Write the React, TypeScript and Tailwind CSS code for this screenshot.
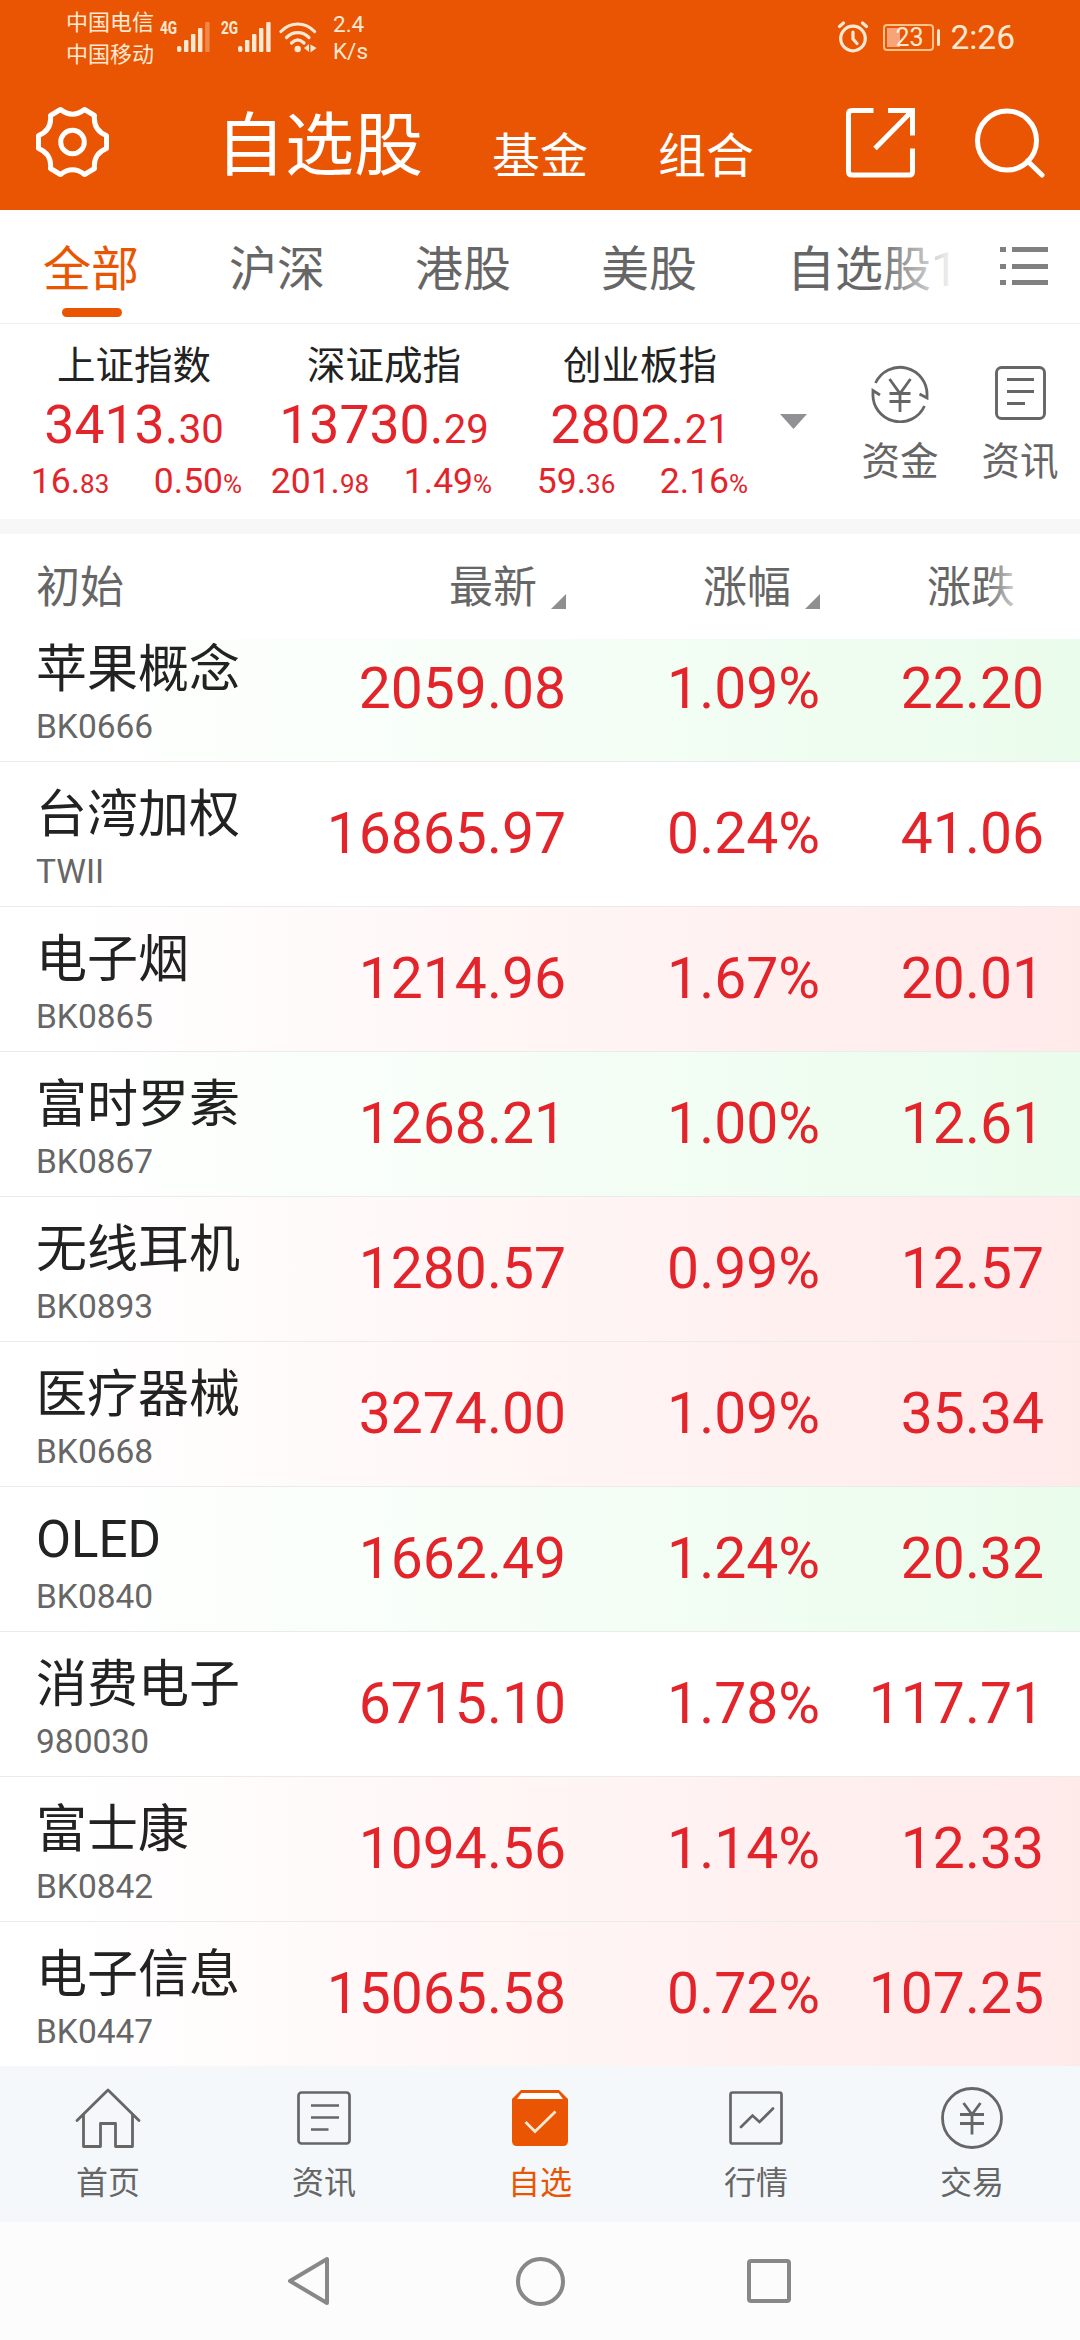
import React from 'react'

type Trend = 'up' | 'down' | 'flat'

interface Quote {
  name: string
  code: string
  price: string
  percent: string
  change: string
  trend: Trend
}

interface MarketIndex {
  name: string
  value: [string, string]
  change: [string, string]
  percent: string
}

const QUOTES: Quote[] = [
  { name: '苹果概念', code: 'BK0666', price: '2059.08', percent: '1.09%', change: '22.20', trend: 'down' },
  { name: '台湾加权', code: 'TWII', price: '16865.97', percent: '0.24%', change: '41.06', trend: 'flat' },
  { name: '电子烟', code: 'BK0865', price: '1214.96', percent: '1.67%', change: '20.01', trend: 'up' },
  { name: '富时罗素', code: 'BK0867', price: '1268.21', percent: '1.00%', change: '12.61', trend: 'down' },
  { name: '无线耳机', code: 'BK0893', price: '1280.57', percent: '0.99%', change: '12.57', trend: 'up' },
  { name: '医疗器械', code: 'BK0668', price: '3274.00', percent: '1.09%', change: '35.34', trend: 'up' },
  { name: 'OLED', code: 'BK0840', price: '1662.49', percent: '1.24%', change: '20.32', trend: 'down' },
  { name: '消费电子', code: '980030', price: '6715.10', percent: '1.78%', change: '117.71', trend: 'flat' },
  { name: '富士康', code: 'BK0842', price: '1094.56', percent: '1.14%', change: '12.33', trend: 'up' },
  { name: '电子信息', code: 'BK0447', price: '15065.58', percent: '0.72%', change: '107.25', trend: 'up' },
]

const INDEXES: MarketIndex[] = [
  { name: '上证指数', value: ['3413.', '30'], change: ['16.', '83'], percent: '0.50' },
  { name: '深证成指', value: ['13730.', '29'], change: ['201.', '98'], percent: '1.49' },
  { name: '创业板指', value: ['2802.', '21'], change: ['59.', '36'], percent: '2.16' },
]

const TABS = ['全部', '沪深', '港股', '美股', '自选股1']

const ROW_BG: Record<Trend, string> = {
  up: 'bg-linear-to-r from-white from-6% to-[#ffeaea]',
  down: 'bg-linear-to-r from-white from-6% to-[#eafcec]',
  flat: 'bg-white',
}

function Signal({ weak }: { weak?: boolean }) {
  return (
    <svg width="33" height="30" viewBox="0 0 33 30" fill="#ffe9d2">
      <rect x="0" y="24" width="4.4" height="6" rx="2" />
      <rect x="7" y="18" width="4.4" height="12" rx="1" />
      <rect x="14" y="12" width="4.4" height="18" rx="1" />
      <rect x="21" y="6" width="4.4" height="24" rx="1" />
      <rect x="28.2" y="0" width="4.4" height="30" rx="1" opacity={weak ? 0.35 : 1} />
    </svg>
  )
}

function WifiIcon() {
  return (
    <svg width="38" height="31" viewBox="0 0 38 31" fill="none" stroke="#ffe9d2" strokeWidth="3.2" strokeLinecap="round">
      <path d="M2 9.5C11.5 -.5 26 -.5 35.5 9.5" />
      <path d="M7.5 15.5C14 9 23.5 9 30 15.5" />
      <path d="M12.5 21C16.5 17 21 17 25 21" />
      <circle cx="18.7" cy="27" r="3.2" fill="#ffe9d2" stroke="none" />
      <path d="M30 22v8l-5-4zM31.5 22.5v8l6-4.5z" fill="#ffe9d2" stroke="none" />
    </svg>
  )
}

function AlarmIcon() {
  return (
    <svg width="32" height="32" viewBox="0 0 32 32" fill="none" stroke="#ffe9d2" strokeWidth="3.2" strokeLinecap="round">
      <circle cx="16" cy="17.5" r="12.3" />
      <path d="M16 11v7l4 4.5" />
      <path d="M2.5 5.5l4-3.500M29.5 5.5l-4-3.500" />
    </svg>
  )
}

function GearIcon() {
  return (
    <svg width="73" height="70" viewBox="0 0 73 70" fill="none" stroke="#fff" strokeWidth="5" strokeLinejoin="round">
      <path d="M24.5 2.500Q36.500 12 48.500 2.500L58.500 8.500Q57 23 70.500 28.500V41.500Q57 47 58.500 61.500L48.500 67.500Q36.500 58 24.500 67.500L14.500 61.500Q16 47 2.500 41.500V28.500Q16 23 14.500 8.500Z" />
      <circle cx="36.5" cy="35" r="11.8" />
    </svg>
  )
}

function ShareIcon() {
  return (
    <svg width="70" height="70" viewBox="0 0 70 70" fill="none" stroke="#fff" strokeWidth="5">
      <path d="M27.5 2.500H6Q2.500 2.500 2.500 6V63.500Q2.500 67 6 67H63.500Q66.500 67 66.500 63.500V40.500" />
      <path d="M42 2.500H66.500V27.500M66 3L29 40.500" />
    </svg>
  )
}

function SearchIcon() {
  return (
    <svg width="70" height="70" viewBox="0 0 70 70" fill="none" stroke="#fff" strokeWidth="5">
      <circle cx="32" cy="32.5" r="29.5" />
      <path d="M52.5 53L67 67" strokeLinecap="round" />
    </svg>
  )
}

function ListIcon() {
  return (
    <svg width="48" height="38" viewBox="0 0 48 38" fill="#808080">
      <path d="M0 0h6v5H0zM12 0h36v5H12zM0 17h6v5H0zM12 17h36v5H12zM0 33h6v5H0zM12 33h36v5H12z" />
    </svg>
  )
}

function FundIcon() {
  return (
    <svg width="58" height="58" viewBox="0 0 58 58" fill="none" stroke="#666" strokeWidth="2.8">
      <path d="M4.5 18A27 27 0 0 1 56 30.500V33L48.500 29" />
      <path d="M53.5 41A27 27 0 0 1 2 28V25.500L9 30" />
      <path d="M18.5 14l10.500 14.500L39.500 14M18.500 28.500h21M18.500 36.500h21M29 28.500V47" />
    </svg>
  )
}

function NewsIcon() {
  return (
    <svg width="54" height="54" viewBox="0 0 54 54" fill="none" stroke="#666" strokeWidth="2.7">
      <rect x="1.5" y="1.5" width="51" height="51" rx="3" />
      <path d="M14 14.5h28M14 26.500h28M14 38.500h17.500" />
    </svg>
  )
}

// 顶部资讯图标比底栏的窄一点,圆角更大
function NewsSmallIcon() {
  return (
    <svg width="51" height="54" viewBox="0 0 51 54" fill="none" stroke="#666" strokeWidth="2.9">
      <rect x="1.5" y="1.5" width="48" height="51" rx="5" />
      <path d="M12 13.5h27M12 25.500h27M12 37.500h18" />
    </svg>
  )
}

function HomeIcon() {
  return (
    <svg width="66" height="60" viewBox="0 0 66 60" fill="none" stroke="#666" strokeWidth="2.8" strokeLinejoin="round" strokeLinecap="round">
      <path d="M2 32.5L33 2L64 32.500" />
      <path d="M8.5 27V58.500H25.500V35.500H40.500V58.500H57.500V27" />
    </svg>
  )
}

function WatchIcon() {
  return (
    <svg width="56" height="56" viewBox="0 0 56 56" fill="none">
      <path d="M9 0H47L56 9V51Q56 56 51 56H5Q0 56 0 51V9Z" fill="#ea5504" />
      <path d="M9.5 3H46.500L51 9H5Z" fill="#fff" />
      <path d="M13.5 32L23 41.500L43.500 21.500" stroke="#ffe9d2" strokeWidth="2.8" />
    </svg>
  )
}

function MarketIcon() {
  return (
    <svg width="54" height="54" viewBox="0 0 54 54" fill="none" stroke="#666" strokeWidth="2.7">
      <rect x="1.5" y="1.5" width="51" height="51" rx="2" />
      <path d="M12 36L23.500 24.500L30.500 31L44 17.500" strokeLinecap="round" />
    </svg>
  )
}

function TradeIcon() {
  return (
    <svg width="62" height="62" viewBox="0 0 62 62" fill="none" stroke="#666" strokeWidth="2.8">
      <circle cx="31" cy="31" r="29.5" />
      <path d="M22.5 16L31 27.500L39.500 16M19 27.500h24M19 36.500h24M31 27.500V47.500" />
    </svg>
  )
}

function SortMark() {
  return (
    <svg width="15" height="15" viewBox="0 0 15 15" fill="#8f8f8f">
      <path d="M15 0V15H0Z" />
    </svg>
  )
}

const NAV_ITEMS = [
  { label: '首页', icon: <HomeIcon /> },
  { label: '资讯', icon: <NewsIcon /> },
  { label: '自选', icon: <WatchIcon />, active: true },
  { label: '行情', icon: <MarketIcon /> },
  { label: '交易', icon: <TradeIcon /> },
]

function StatusBar() {
  return (
    <div className="flex h-[74px] items-start pl-[66px] pr-[65px] text-[#ffe9d2]">
      <div className="mt-[7px] w-[94px] whitespace-nowrap text-[22px] leading-[32px]">
        <div>中国电信</div>
        <div>中国移动</div>
      </div>
      <div className="mt-[18px] w-[17px] text-[19px] font-bold leading-[20px]">
        <span className="inline-block origin-left scale-x-[0.72]">4G</span>
      </div>
      <div className="mt-[22px] w-[44px]"><Signal weak /></div>
      <div className="mt-[18px] w-[17px] text-[19px] font-bold leading-[20px]">
        <span className="inline-block origin-left scale-x-[0.72]">2G</span>
      </div>
      <div className="mt-[22px] w-[41px]"><Signal /></div>
      <div className="mt-[22px] w-[54px]"><WifiIcon /></div>
      <div className="mt-[11px] text-[22.5px] leading-[27px]">
        <div>2.4</div>
        <div>K/s</div>
      </div>
      <div className="ml-auto mt-[21px]"><AlarmIcon /></div>
      {/* 电池 */}
      <div className="ml-[14px] mt-[24px] flex h-[27px] w-[51px] rounded-[4px] border-2 border-[#ffc08a] p-[2px]">
        <div className="w-[13px] bg-[#f6a578]" />
        <div className="-ml-[5px] text-[25px] leading-[19px]">23</div>
      </div>
      <div className="ml-[3px] mt-[29px] h-[17px] w-[3px] rounded-sm bg-[#ffe9d2]" />
      <div className="ml-[10px] mt-[18px] text-[33.5px] leading-[40px]">2:26</div>
    </div>
  )
}

function TitleBar() {
  return (
    <div className="flex h-[136px] items-start pl-[36px] pr-[35px] text-white">
      <div className="mt-[33px] w-[180px]"><GearIcon /></div>
      <div className="mt-[33px] text-[69px] leading-[80px]">自选股</div>
      <div className="ml-[69px] mt-[51px] text-[48px] leading-[64px]">基金</div>
      <div className="ml-[70px] mt-[51px] text-[48px] leading-[64px]">组合</div>
      <div className="ml-auto mt-[34px]"><ShareIcon /></div>
      <div className="ml-[59px] mt-[34px]"><SearchIcon /></div>
    </div>
  )
}

function IndexCard({ item }: { item: MarketIndex }) {
  return (
    <div className="w-[256px] text-center text-[#e3242b]">
      <div className="text-[38.5px] leading-[50px] text-[#222]">{item.name}</div>
      <div className="mt-[4px] text-[53.5px] leading-[60px]">
        {item.value[0]}
        <span className="text-[40px]">{item.value[1]}</span>
      </div>
      <div className="-mt-px grid grid-cols-2 text-[35.5px] leading-[44px]">
        <div>
          {item.change[0]}
          <span className="text-[26px]">{item.change[1]}</span>
        </div>
        <div>
          {item.percent}
          <span className="text-[26px]">%</span>
        </div>
      </div>
    </div>
  )
}

function QuoteRow({ quote }: { quote: Quote }) {
  return (
    <div className={`flex h-[145px] shrink-0 items-center border-b border-[#ebebeb] ${ROW_BG[quote.trend]}`}>
      <div className="w-[265px] self-start pl-[36px] pt-[21px]">
        <div className="text-[51px] leading-[64px] text-[#222]">{quote.name}</div>
        <div className="mt-[5px] text-[33.5px] leading-[40px] text-[#666]">{quote.code}</div>
      </div>
      <div className="w-[301px] text-right text-[57px] leading-[70px] text-[#e3242b]">{quote.price}</div>
      <div className="w-[254px] text-right text-[57px] leading-[70px] text-[#e3242b]">{quote.percent}</div>
      <div className="w-[224px] text-right text-[57px] leading-[70px] text-[#e3242b]">{quote.change}</div>
    </div>
  )
}

export default function App() {
  return (
    <div className="flex h-[2340px] w-[1080px] flex-col overflow-hidden bg-white font-['Roboto','Noto_Sans_CJK_SC',sans-serif]">
      <header className="h-[210px] bg-[#ea5504]">
        <StatusBar />
        <TitleBar />
      </header>

      {/* 分组标签 */}
      <div className="flex h-[114px] border-b border-[#eee]">
        <div className="relative flex w-[957px] gap-[90px] overflow-hidden whitespace-nowrap pl-[43px] text-[48px] leading-[64px] text-[#666]">
          {TABS.map((tab, i) => (
            <div key={tab} className={i === 0 ? 'flex flex-col items-center pt-[28px] text-[#ea5504]' : 'pt-[28px]'}>
              {tab}
              {i === 0 && <div className="mt-[6px] ml-[2px] h-[9px] w-[60px] rounded-full bg-[#ea5504]" />}
            </div>
          ))}
          <div className="absolute inset-y-0 right-0 w-[80px] bg-linear-to-r from-white/0 to-white" />
        </div>
        <div className="ml-[43px] mt-[37px]"><ListIcon /></div>
      </div>

      {/* 指数 */}
      <div className="flex h-[195px] pl-[6px] pt-[17px]">
        <div className="grid grid-cols-[250px_256px_256px]">
          {INDEXES.map((item) => (
            <IndexCard key={item.name} item={item} />
          ))}
        </div>
        <svg className="ml-[12px] mt-[73px]" width="27" height="15" viewBox="0 0 27 15" fill="#919195">
          <path d="M0 0H27L13.500 15Z" />
        </svg>
        <div className="ml-[33px] mt-[24px] flex w-[120px] flex-col items-center text-[38.5px] leading-[50px] text-[#666]">
          <FundIcon />
          <div className="mt-[14px]">资金</div>
        </div>
        <div className="mt-[25px] flex w-[120px] flex-col items-center text-[38.5px] leading-[50px] text-[#666]">
          <NewsSmallIcon />
          <div className="mt-[17px]">资讯</div>
        </div>
      </div>
      <div className="h-[15px] bg-[#f7f7f7]" />

      {/* 表头 */}
      <div className="flex h-[105px] items-start pt-[24px] text-[44px] leading-[60px] text-[#666]">
        <div className="w-[265px] pl-[36px]">初始</div>
        <div className="flex w-[301px] items-end justify-end gap-[14px]">
          最新
          <div className="pb-[9px]"><SortMark /></div>
        </div>
        <div className="flex w-[254px] items-end justify-end gap-[14px]">
          涨幅
          <div className="pb-[9px]"><SortMark /></div>
        </div>
        <div className="relative ml-[107px]">
          涨跌
          <div className="absolute inset-y-0 right-0 w-[30px] bg-linear-to-r from-white/0 to-white/70" />
        </div>
      </div>

      {/* 行情列表,首行被表头遮住一部分 */}
      <main className="flex h-[1427px] flex-col justify-end overflow-hidden">
        <div className="-mb-px">
          {QUOTES.map((quote) => (
            <QuoteRow key={quote.code} quote={quote} />
          ))}
        </div>
      </main>

      <nav className="grid h-[156px] grid-cols-5 bg-[#f4f8fb]">
        {NAV_ITEMS.map(({ label, icon, active }) => (
          <div
            key={label}
            className={`flex flex-col items-center pt-[20px] text-[32px] leading-[44px] ${active ? 'text-[#ea5504]' : 'text-[#666]'}`}
          >
            <div className="flex h-[64px] items-center justify-center">{icon}</div>
            <div className="mt-[11px]">{label}</div>
          </div>
        ))}
      </nav>

      {/* 系统导航键 */}
      <div className="flex h-[118px] items-center bg-[#fcfcfc] pl-[287px]">
        <svg width="43" height="50" viewBox="0 0 43 50" fill="none" stroke="#888" strokeWidth="4" strokeLinejoin="round">
          <path d="M40 3V47L3 25Z" />
        </svg>
        <div className="ml-[186px] size-[49px] rounded-full border-4 border-[#888]" />
        <div className="ml-[182px] size-[44px] rounded-[4px] border-4 border-[#888]" />
      </div>
    </div>
  )
}
